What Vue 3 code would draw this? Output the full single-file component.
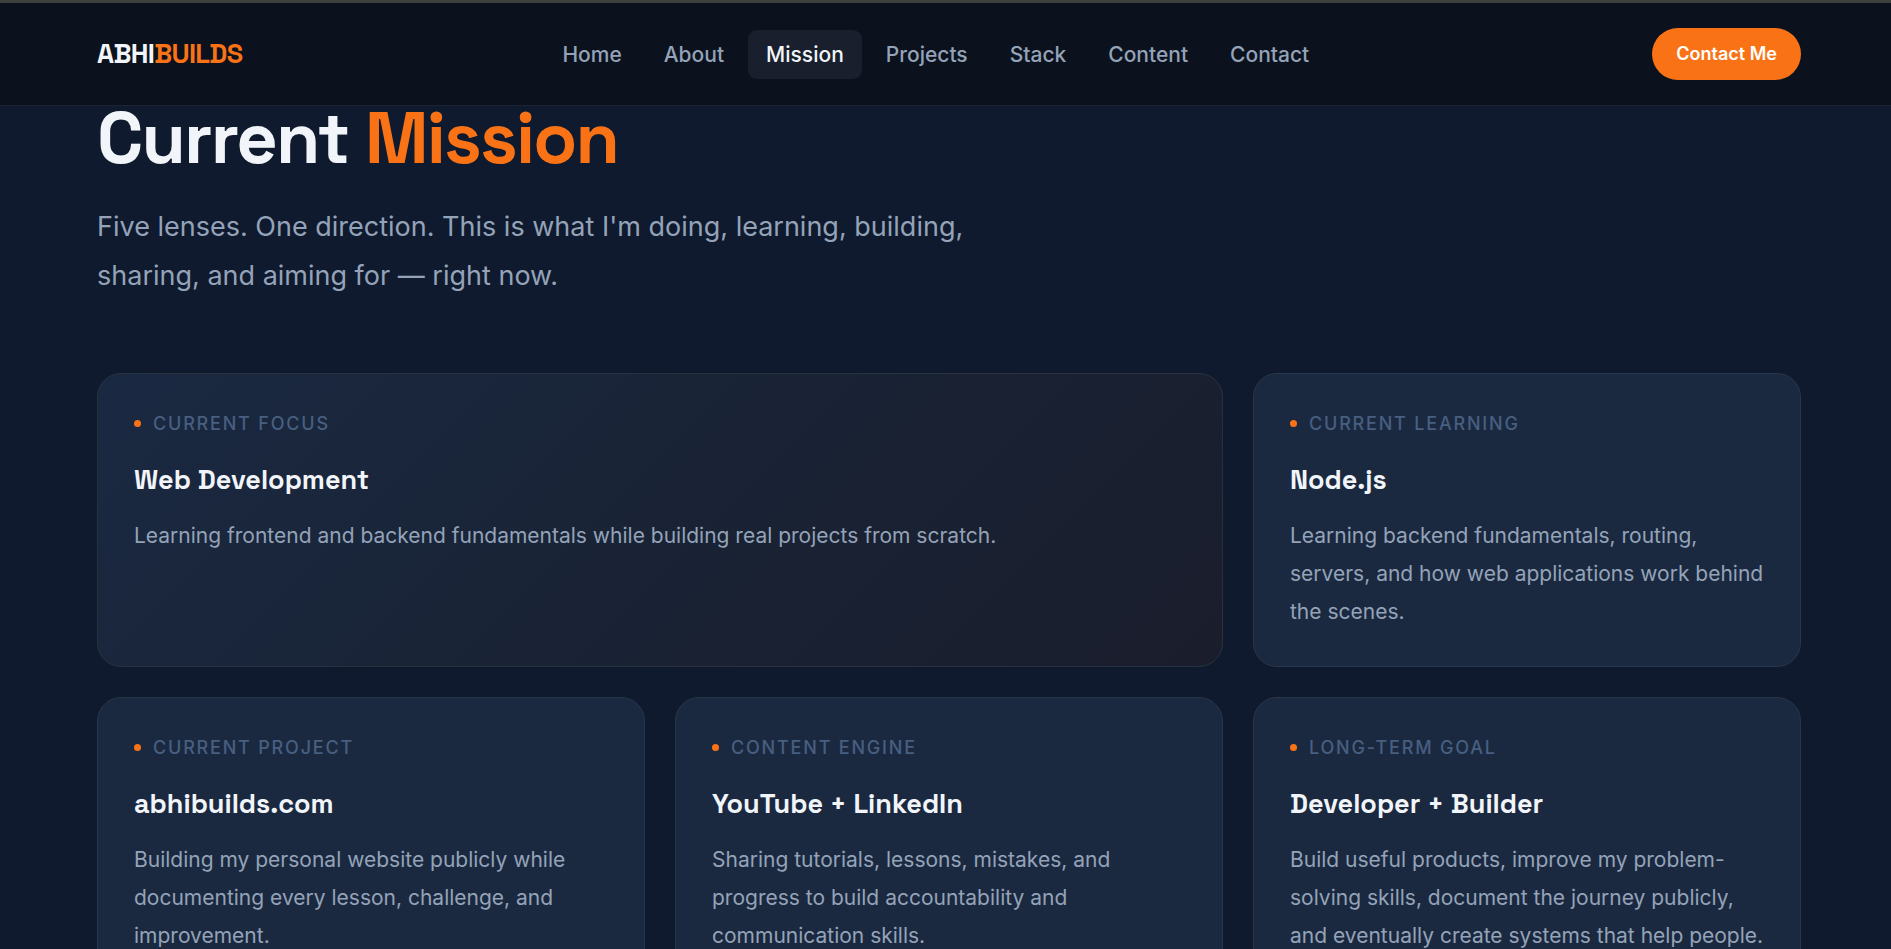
<script setup>
const links = ['Home', 'About', 'Mission', 'Projects', 'Stack', 'Content', 'Contact']
const active = 'Mission'

const cards = [
  {
    label: 'Current Focus',
    title: 'Web Development',
    text: 'Learning frontend and backend fundamentals while building real projects from scratch.',
    wide: true,
  },
  {
    label: 'Current Learning',
    title: 'Node.js',
    text: 'Learning backend fundamentals, routing, servers, and how web applications work behind the scenes.',
  },
  {
    label: 'Current Project',
    title: 'abhibuilds.com',
    text: 'Building my personal website publicly while documenting every lesson, challenge, and improvement.',
  },
  {
    label: 'Content Engine',
    title: 'YouTube + LinkedIn',
    text: 'Sharing tutorials, lessons, mistakes, and progress to build accountability and communication skills.',
  },
  {
    label: 'Long-Term Goal',
    title: 'Developer + Builder',
    text: 'Build useful products, improve my problem-solving skills, document the journey publicly, and eventually create systems that help people.',
  },
]
</script>

<template>
  <div class="page">
    <header class="header">
      <a class="logo" href="#home">ABHI<span class="accent">BUILDS</span></a>
      <nav class="nav" aria-label="Main">
        <a
          v-for="link in links"
          :key="link"
          class="nav-link"
          :class="{ active: link === active }"
          :href="'#' + link.toLowerCase()"
        >{{ link }}</a>
      </nav>
      <button class="cta" type="button">Contact Me</button>
    </header>

    <main class="mission">
      <h1 class="heading">Current <span class="accent">Mission</span></h1>
      <p class="lead">
        Five lenses. One direction. This is what I'm doing, learning, building, sharing, and aiming for — right now.
      </p>
      <div class="grid">
        <article v-for="card in cards" :key="card.label" class="card" :class="{ wide: card.wide }">
          <p class="label">{{ card.label }}</p>
          <h2 class="title">{{ card.title }}</h2>
          <p class="text">{{ card.text }}</p>
        </article>
      </div>
    </main>
  </div>
</template>

<style>
body {
  margin: 0;
  background: #0f1a2e;
}
</style>

<style scoped>
.page {
  box-sizing: border-box;
  height: 100vh;
  overflow: hidden auto;
  scrollbar-width: none;
  background: #0f1a2e;
  color: #f1f5f9;
  font-family: Inter, "Liberation Sans", sans-serif;
}

.accent {
  color: #f97316;
}

.header {
  position: sticky;
  top: 0;
  z-index: 1;
  display: grid;
  grid-template-columns: 17fr auto 18fr;
  align-items: center;
  padding: 25px 90px 25px 97px;
  border-top: 3px solid #3f3f3f;
  border-bottom: 1px solid #1b2430;
  background: #0b121e;
}

.logo {
  justify-self: start;
  color: #f1f5f9;
  font-family: "Space Grotesk", Inter, sans-serif;
  font-size: 27px;
  font-weight: 700;
  letter-spacing: -0.025em;
  line-height: 32px;
  text-decoration: none;
}

.nav {
  display: flex;
  gap: 6px;
}

.nav-link {
  padding: 12px 18px;
  border-radius: 9px;
  color: #94a3b8;
  font-size: 21px;
  font-weight: 500;
  line-height: 25px;
  text-decoration: none;
}

.nav-link.active {
  background: #191f2c;
  color: #f1f5f9;
}

.cta {
  justify-self: end;
  padding: 14px 24px;
  border: 0;
  border-radius: 26px;
  background: #f97316;
  color: #fff;
  font-family: inherit;
  font-size: 18px;
  font-weight: 600;
  line-height: 24px;
}

.mission {
  padding: 0 90px 36px 97px;
}

.heading {
  margin: 0 0 32px;
  font-family: "Space Grotesk", Inter, sans-serif;
  font-size: 72px;
  font-weight: 700;
  letter-spacing: -0.025em;
  line-height: 64px;
}

.lead {
  max-width: 900px;
  margin: 0 0 73px;
  color: #94a3b8;
  font-size: 27px;
  line-height: 49px;
}

.grid {
  display: grid;
  grid-template-columns: repeat(3, 1fr);
  gap: 30px;
}

.card {
  padding: 36px;
  border: 1px solid #28364a;
  border-radius: 24px;
  background: #1b2940;
}

.wide {
  grid-column: span 2;
  border-color: #28323f;
  background: linear-gradient(135deg, #1a2942, #192335 50%, #1a1d2c);
}

.label {
  display: flex;
  align-items: center;
  gap: 12px;
  margin: 0 0 25px;
  color: #475f80;
  font-size: 18px;
  font-weight: 500;
  letter-spacing: 0.1em;
  line-height: 27px;
  text-transform: uppercase;
}

.label::before {
  content: "";
  width: 7px;
  height: 7px;
  border-radius: 50%;
  background: #f97316;
}

.title {
  margin: 0 0 20px;
  font-family: "Space Grotesk", Inter, sans-serif;
  font-size: 27px;
  font-weight: 700;
  line-height: 35px;
}

.text {
  margin: 0;
  color: #94a3b8;
  font-size: 21px;
  line-height: 1.8;
}
</style>
